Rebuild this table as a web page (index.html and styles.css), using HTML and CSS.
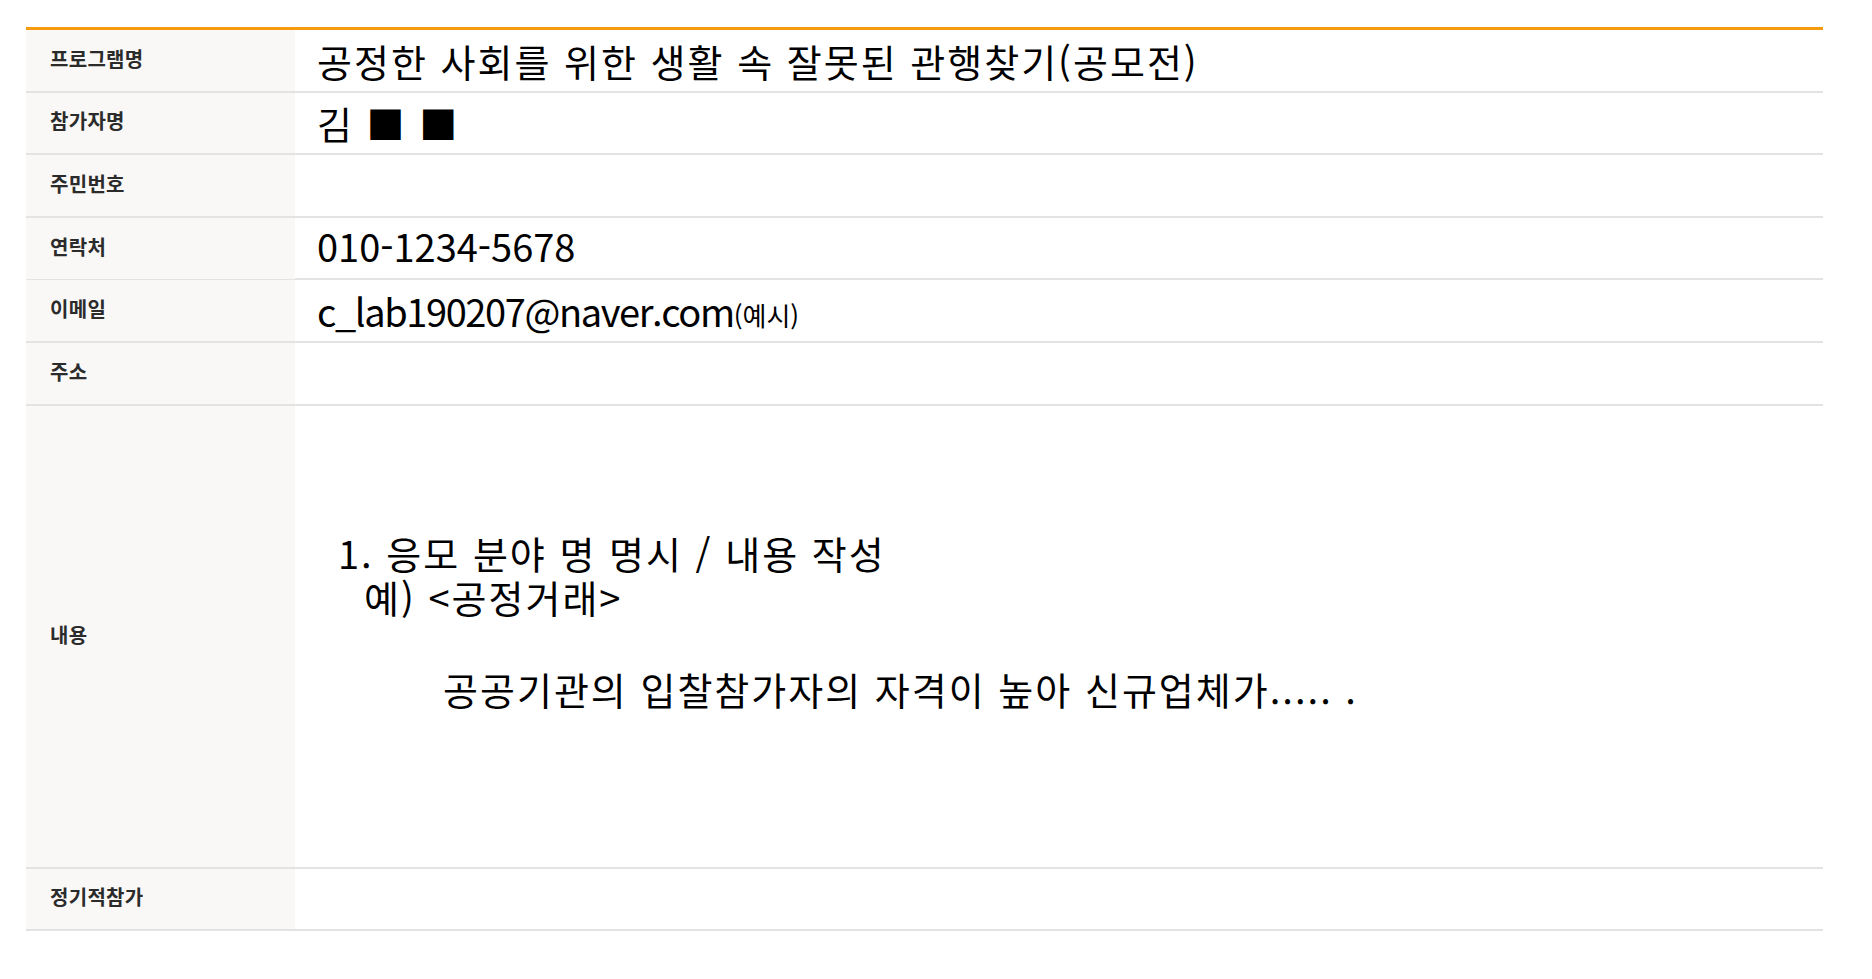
FILE: index.html
```html
<!DOCTYPE html>
<html lang="ko">
<head>
    <meta charset="UTF-8">
    <title>공모전 참가 신청</title>
    <link rel="stylesheet" href="styles.css">
</head>
<body>
<div class="sheet">
    <div class="row">
        <div class="label">프로그램명</div>
        <div class="value kr">공정한 사회를 위한 생활 속 잘못된 관행찾기(공모전)</div>
    </div>
    <div class="row">
        <div class="label">참가자명</div>
        <div class="value kr">김 ■ ■</div>
    </div>
    <div class="row">
        <div class="label">주민번호</div>
        <div class="value"></div>
    </div>
    <div class="row">
        <div class="label">연락처</div>
        <div class="value phone">010-1234-5678</div>
    </div>
    <div class="row">
        <div class="label">이메일</div>
        <div class="value mail">c_lab190207@naver.com<small class="note">(예시)</small></div>
    </div>
    <div class="row">
        <div class="label">주소</div>
        <div class="value"></div>
    </div>
    <div class="row row-big">
        <div class="label">내용</div>
        <div class="value kr content">
            <p class="line l1">1. 응모 분야 명 명시 / 내용 작성</p>
            <p class="line l2">예) &lt;공정거래&gt;</p>
            <p class="line blank"></p>
            <p class="line l3">공공기관의 입찰참가자의 자격이 높아 신규업체가..... .</p>
        </div>
    </div>
    <div class="row">
        <div class="label">정기적참가</div>
        <div class="value"></div>
    </div>
</div>
</body>
</html>
```

FILE: styles.css
```css
body {
    margin: 0;
    background: #fff;
    font-family: "Noto Sans CJK KR", "Noto Sans", sans-serif;
}

.sheet {
    width: 1797px;
    margin: 27px 0 0 26px;
    border-top: 3px solid #f59a0c;
}

.row {
    display: grid;
    grid-template-columns: 269px 1fr;
    height: 62.6px;
    box-sizing: border-box;
    border-bottom: 2px solid #e3e3e3;
}

.row-big {
    height: 463px;
}

.label {
    display: flex;
    align-items: center;
    padding: 0 0 4px 24px;
    background: #f9f8f6;
    color: #2b2b2b;
    font-size: 20px;
    font-weight: bold;
    letter-spacing: 0.3px;
}

.value {
    display: flex;
    align-items: center;
    padding-left: 22px;
    color: #000;
    font-size: 38px;
    white-space: nowrap;
}

/* 한글 위주 값은 자간을 조금 벌림 */
.kr {
    letter-spacing: 2px;
}

.phone {
    padding-bottom: 6px;
}

.mail {
    letter-spacing: -1.4px;
}

.note {
    font-size: 26px;
    letter-spacing: 0;
    margin-top: 8px;
}

.content {
    display: block;
    padding-top: 125px;
}

.line {
    margin: 0;
    height: 44px;
    line-height: 44px;
}

.blank {
    height: 48px;
}

.l1 {
    padding-left: 21px;
}

.l2 {
    padding-left: 47px;
}

.l3 {
    padding-left: 126px;
}
```
